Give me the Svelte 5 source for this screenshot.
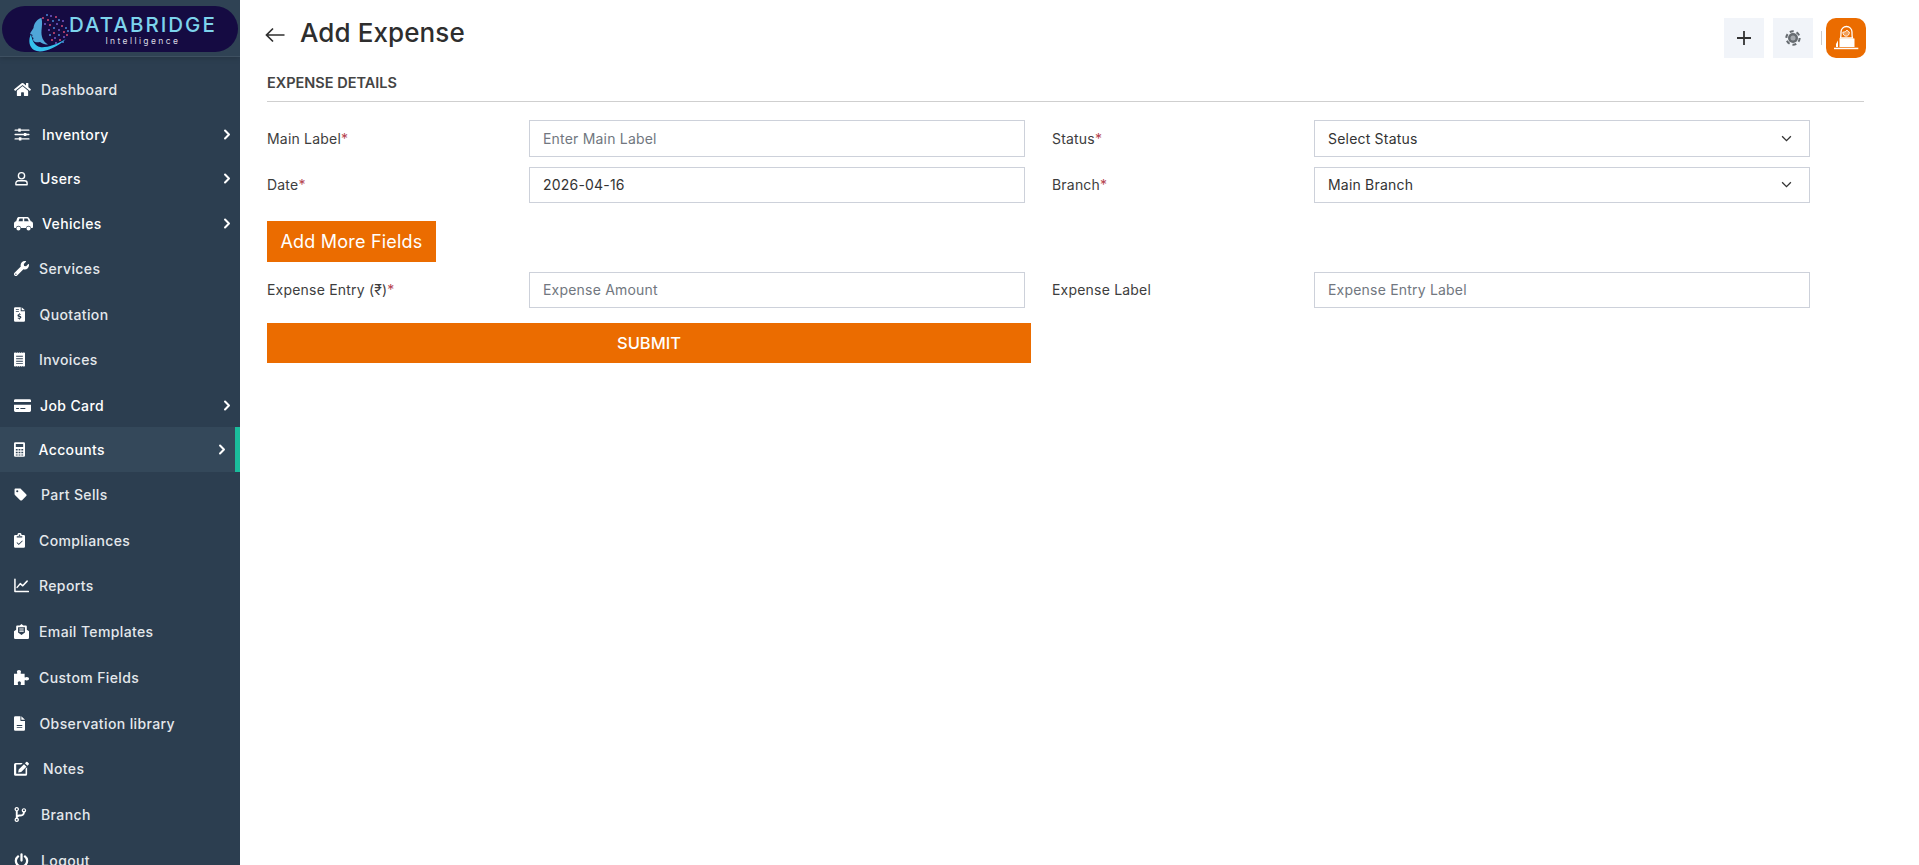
<script lang="ts">
  // icon paths on a 24 grid unless a nav item brings its own viewBox
  const HOME = 'M280.37 148.26L96 300.11V464a16 16 0 0 0 16 16l112.06-.29a16 16 0 0 0 15.92-16V368a16 16 0 0 1 16-16h64a16 16 0 0 1 16 16v95.64a16 16 0 0 0 16 16.05L464 480a16 16 0 0 0 16-16V300L295.67 148.26a12.19 12.19 0 0 0-15.3 0zM571.6 251.47L488 182.56V44.05a12 12 0 0 0-12-12h-56a12 12 0 0 0-12 12v72.61L318.47 43a48 48 0 0 0-61 0L4.34 251.47a12 12 0 0 0-1.6 16.9l25.5 31A12 12 0 0 0 45.15 301l235.22-193.74a12.19 12.19 0 0 1 15.3 0L530.9 301a12 12 0 0 0 16.9-1.6l25.5-31a12 12 0 0 0-1.7-16.93z';
  const WRENCH = 'M507.73 109.1c-2.24-9.03-13.54-12.09-20.12-5.51l-74.36 74.36-67.88-11.31-11.31-67.88 74.36-74.36c6.62-6.62 3.43-17.9-5.66-20.16-47.38-11.74-99.55.91-136.58 37.93-39.64 39.64-50.55 97.1-34.05 147.2L18.74 402.76c-24.99 24.99-24.99 65.51 0 90.5 24.99 24.99 65.51 24.99 90.5 0l213.21-213.21c50.12 16.71 107.47 5.68 147.37-34.22 37.07-37.07 49.7-89.32 37.91-136.73zM64 472c-13.25 0-24-10.75-24-24 0-13.26 10.75-24 24-24s24 10.74 24 24c0 13.25-10.75 24-24 24z';

  const nav = [
    { label: 'Dashboard', w: 17, gap: 10, vb: '0 0 576 512', d: HOME },
    { label: 'Inventory', w: 16, gap: 12, sub: true, line: 'M1 5h22M1 12h22M1 19h22', d: 'M6 2.5h4v5H6zM15 9.5h4v5h-4zM7 16.5h4v5H7z' },
    { label: 'Users', w: 15, gap: 11, sub: true, line: 'M12 2.5a5 5 0 1 1 0 10a5 5 0 1 1 0-10zM3 22v-2.5a4 4 0 0 1 4-4h10a4 4 0 0 1 4 4V22z' },
    { label: 'Vehicles', w: 19, gap: 9, sub: true, vb: '0 0 26 20', d: 'M7 1h11c1.2 0 2 .6 2.6 1.6L23 7c1.8.4 3 1.6 3 3.4V15c0 .6-.4 1-1 1h-1.6a3.6 3.6 0 0 0-7 0H9.600a3.6 3.6 0 0 0-7 0H1c-.6 0-1-.4-1-1v-4.600C0 8.600 1.200 7.400 3 7l1.400-4.400C4.800 1.600 5.800 1 7 1zM7.600 3.200 6.200 7H12V3.200zM14 3.200V7h6.200l-1.800-3.800zM6.100 14a2.800 2.800 0 1 1 0 5.600a2.800 2.800 0 1 1 0-5.600zM19.900 14a2.800 2.800 0 1 1 0 5.600a2.800 2.800 0 1 1 0-5.600z' },
    { label: 'Services', w: 15, gap: 10, vb: '0 0 512 512', d: WRENCH },
    { label: 'Quotation', w: 11, gap: 14.500, vb: '0 0 18 24', d: 'M2 0h9v6.500h7V22a2 2 0 0 1-2 2H2a2 2 0 0 1-2-2V2a2 2 0 0 1 2-2zM12.500 0 18 5h-5.500zM3 3.500v1.300h5V3.500zM3 6.500v1.300h5V6.500zM8.200 10v1.300c-1.500.2-2.500 1.100-2.500 2.400 0 1.400 1.100 2 2.500 2.400 1.100.3 1.600.6 1.600 1 0 .5-.6.7-1.200.7-.7 0-1.500-.3-2-.7l-.8 1.200c.6.500 1.400.8 2.400 .9V20h1.400v-1.300c1.500-.2 2.400-1.100 2.400-2.400 0-1.400-1-2-2.400-2.400-1.100-.3-1.700-.5-1.700-1 0-.4.500-.6 1.100-.6.600 0 1.200.2 1.700.5l.7-1.200c-.5-.3-1.100-.5-1.800-.6V10z' },
    { label: 'Invoices', w: 11, gap: 14, vb: '0 0 18 24', d: 'M0 0l1.500 1.200L3 0l1.500 1.200L6 0l1.500 1.200L9 0l1.500 1.200L12 0l1.500 1.200L15 0l1.500 1.200L18 0v24l-1.500-1.200L15 24l-1.500-1.200L12 24l-1.500-1.200L9 24l-1.500-1.200L6 24l-1.500-1.200L3 24l-1.500-1.200L0 24zM3.500 6v1.500h11V6zM3.500 10v1.500h11V10zM3.500 14v1.500h11V14zM3.500 18v1.500h11V18z' },
    { label: 'Job Card', w: 17, gap: 9, sub: true, vb: '0 0 24 18', d: 'M2 0h20a2 2 0 0 1 2 2v2H0V2a2 2 0 0 1 2-2zM0 8h24v8a2 2 0 0 1-2 2H2a2 2 0 0 1-2-2zM3 12.500v1.500h4v-1.500zM9 12.500v1.500h7v-1.500z' },
    { label: 'Accounts', w: 11, gap: 13.500, sub: true, active: true, vb: '0 0 18 24', d: 'M2 0h14a2 2 0 0 1 2 2v20a2 2 0 0 1-2 2H2a2 2 0 0 1-2-2V2a2 2 0 0 1 2-2zM3 3v5h12V3zM3 11v2.500h3V11zM7.500 11v2.500h3V11zM12 11v2.500h3V11zM3 15.500V18h3v-2.500zM7.500 15.500V18h3v-2.500zM12 15.500V18h3v-2.500zM3 20v2h3v-2zM7.500 20v2h3v-2zM12 20v2h3v-2z' },
    { label: 'Part Sells', w: 13, gap: 14, vb: '0 0 24 24', d: 'M2.500 1H11c.7 0 1.300.3 1.800.7l9.700 9.700c1 1 1 2.500 0 3.500l-7.600 7.600c-1 1-2.500 1-3.500 0l-9.700-9.700C1.300 12.300 1 11.700 1 11V2.500C1 1.700 1.700 1 2.500 1zM6 4a2 2 0 1 0 0 4a2 2 0 1 0 0-4z' },
    { label: 'Compliances', w: 11, gap: 14, vb: '0 0 18 24', d: 'M2 3h3.500a3.500 3.500 0 0 1 7 0H16a2 2 0 0 1 2 2v17a2 2 0 0 1-2 2H2a2 2 0 0 1-2-2V5a2 2 0 0 1 2-2zM9 2a1.300 1.300 0 1 0 0 2.600A1.300 1.300 0 0 0 9 2zM4.500 5v2h9V5zM13.400 11.800l-5.600 5.600-2.700-2.700-1 1 3.700 3.700 6.600-6.600z' },
    { label: 'Reports', w: 15, gap: 10, line: 'M1.500 2v19.500H23M5 15l5-6 4 3.500L21 5', sw: 2.400 },
    { label: 'Email Templates', w: 15, gap: 10, vb: '0 0 24 24', d: 'M12 0l3 2.500h4a1.500 1.500 0 0 1 1.500 1.500v5L24 11.500V22a2 2 0 0 1-2 2H2a2 2 0 0 1-2-2V11.500L3.500 9V4A1.500 1.500 0 0 1 5 2.500h4zM6.500 5v8.500l5.500 4 5.500-4V5zM8.500 7v1.800h7V7zM8.500 10.500v1.800h7v-1.800z' },
    { label: 'Custom Fields', w: 15, gap: 10, vb: '0 0 24 24', d: 'M8 0c2 0 3.200 1.200 3.200 2.800 0 1-.7 1.600-.7 2.400 0 .4.300.8 1 .8H17v5c0 .7.400 1 .8 1 .8 0 1.400-.7 2.400-.7C22.800 11.300 24 12.500 24 14s-1.200 2.700-3.800 2.700c-1 0-1.600-.7-2.400-.7-.4 0-.8.300-.8 1v7h-5.500c-.7 0-1-.4-1-.8 0-.8.700-1.400.7-2.400C11 19.200 9.800 18 8.500 18S6 19.200 6 20.800c0 1 .7 1.600.7 2.400 0 .4-.3.8-1 .8H0V6h4.300c.7 0 1-.4 1-.8 0-.8-.7-1.400-.7-2.400C4.600 1.200 6 0 8 0z' },
    { label: 'Observation library', w: 11, gap: 14.500, vb: '0 0 18 24', d: 'M2 0h8.500v6.500c0 .8.700 1.500 1.500 1.500h6v14a2 2 0 0 1-2 2H2a2 2 0 0 1-2-2V2a2 2 0 0 1 2-2zM12 0l6 6h-6zM4.500 14.500v1.500h9v-1.500zM4.500 18v1.500h9V18z' },
    { label: 'Notes', w: 15, gap: 14, vb: '0 0 24 24', d: 'M2.500 3H14l-2.500 2.500H3.500v15h15v-8l2.500-2.500V21a2.500 2.500 0 0 1-2.500 2.500h-16A2.500 2.500 0 0 1 0 21V5.500A2.500 2.500 0 0 1 2.500 3zM19.500 1.500a1.500 1.500 0 0 1 2 0l2 2a1.500 1.500 0 0 1 0 2L21.500 7.500 17.500 3.500zM16 5l4 4-8.500 8.500-4.800.8.800-4.800z' },
    { label: 'Branch', w: 13, gap: 14, vb: '0 0 20 24', d: 'M4 0a3.500 3.500 0 0 1 1.500 6.700v6.100c1-.6 2.200-.8 3.500-.8 3 0 4.900-1 5-3.400a3.500 3.500 0 1 1 3 0C16.800 12.400 13.500 15 9 15c-2 0-3.500 1-3.500 2.300a3.500 3.500 0 1 1-3 0V6.700A3.500 3.500 0 0 1 4 0zM4 2a1.500 1.500 0 1 0 0 3A1.500 1.500 0 0 0 4 2zM15.500 3.500a1.500 1.500 0 1 0 0 3 1.500 1.500 0 0 0 0-3zM4 19a1.500 1.500 0 1 0 0 3 1.500 1.500 0 0 0 0-3z' },
    { label: 'Logout', w: 15, gap: 12, line: 'M12 2v10M6.500 5.500a9 9 0 1 0 11 0', sw: 3.600 }
  ];

  const dots = [
    [31, 12], [35, 9], [39, 10], [44, 11], [47, 14], [51, 15], [36, 14], [41, 15], [45, 18], [50, 20], [54, 22],
    [33, 18], [38, 19], [42, 22], [47, 24], [52, 26], [56, 25], [37, 24], [42, 27], [47, 29], [52, 31], [55, 29],
    [38, 29], [43, 32], [48, 34], [51, 36], [44, 37], [40, 34]
  ];
</script>

<div class="page">
  <aside class="sidebar">
    <div class="brand">
      <div class="logo">
        <svg class="logo-mark" viewBox="0 0 60 52" width="60" height="52" aria-hidden="true">
          <path d="M29 12c-5 2-7 6-7.500 10L18 27.500l2.500 1.500-.5 2 1.500 1-.5 2c1 2.500 4 2.500 7 2 3 2 5 2.500 8 2.500-5-3-7-8-6.500-14 .5-5 1-8 0-12.500z" fill="#4fa6d8" />
          <path d="M19 28c-3 6-2 13 3 16 7 4 21-1 32-11-10 6-20 9-26 8-5-1-8-6-9-13z" fill="#35c0ec" />
          {#each dots as [cx, cy], i}
            <circle {cx} {cy} r="0.95" fill={i % 3 === 0 ? '#e0507a' : i % 3 === 1 ? '#4f8fe0' : '#7a5fd0'} />
          {/each}
        </svg>
        <div class="logo-text">
          <span class="logo-name">DATABRIDGE</span>
          <span class="logo-sub">Intelligence</span>
        </div>
      </div>
    </div>

    <nav>
      {#each nav as item}
        <div class="item" class:sub={item.sub} class:active={item.active}>
          <svg
            class="ico"
            viewBox={item.vb ?? '0 0 24 24'}
            style="width:{item.w}px;margin-right:{item.gap}px"
            aria-hidden="true"
          >
            {#if item.line}
              <path d={item.line} fill="none" stroke="#fff" stroke-width={item.sw ?? 2.2} stroke-linecap="round" stroke-linejoin="round" />
            {/if}
            {#if item.d}
              <path d={item.d} fill="#fff" fill-rule="evenodd" />
            {/if}
          </svg>
          <span>{item.label}</span>
          {#if item.sub}
            <svg class="chev" viewBox="0 0 10 14" width="8" height="11" aria-hidden="true">
              <path d="M2.500 2l5 5-5 5" fill="none" stroke="#fff" stroke-width="2.600" stroke-linecap="round" stroke-linejoin="round" />
            </svg>
          {/if}
        </div>
      {/each}
    </nav>
  </aside>

  <main>
    <header class="topbar">
      <svg class="back" viewBox="0 0 20 16" width="20" height="16" aria-hidden="true">
        <path d="M19.500 8H1.500M8 1.500 1.500 8 8 14.500" fill="none" stroke="#2f2f2f" stroke-width="1.700" />
      </svg>
      <h1>Add Expense</h1>
      <div class="actions">
        <button class="tool" aria-label="Add">
          <svg viewBox="0 0 16 16" width="16" height="16" aria-hidden="true">
            <path d="M8 1v14M1 8h14" stroke="#333" stroke-width="1.800" />
          </svg>
        </button>
        <button class="tool" aria-label="Settings">
          <svg viewBox="0 0 24 24" width="16" height="16" aria-hidden="true">
            <circle cx="12" cy="12" r="10" fill="none" stroke="#666b70" stroke-width="3" stroke-dasharray="6 4.470" />
            <circle cx="12" cy="12" r="7.500" fill="#666b70" />
            <circle cx="12" cy="12" r="3.800" fill="#a4a8ad" />
          </svg>
        </button>
        <span class="divider"></span>
        <div class="avatar">
          <svg viewBox="0 0 40 40" width="40" height="40" aria-hidden="true">
            <path d="M14.500 20c.6-1.500.5-3.500.5-6a5.500 5.500 0 0 1 11 0c0 2.500-.1 4.500.5 6z" fill="none" stroke="#fff" stroke-width="1.300" />
            <path d="M16.800 14.200c2 0 3.300-.9 4.200-2.200.6 1.200 1.200 1.800 2.400 2.200-.1 2.300-1.400 4-3.300 4s-3.200-1.700-3.300-4z" fill="#fff" fill-opacity="0.35" stroke="#fff" stroke-width="0.900" />
            <path d="M13.500 20.500h15v8.500h-15z" fill="#fff" />
            <path d="M10 26l2-3.500V29h-2z" fill="#fff" />
            <path d="M8 29.700h24.300v1.500H8z" fill="#fff" />
          </svg>
        </div>
      </div>
    </header>

    <h2>EXPENSE DETAILS</h2>

    <form onsubmit={(e) => e.preventDefault()}>
      <div class="row first">
        <label class="field">
          <span>Main Label<em>*</em></span>
          <input type="text" placeholder="Enter Main Label" />
        </label>
        <label class="field">
          <span>Status<em>*</em></span>
          <div class="select">
            <select>
              <option>Select Status</option>
            </select>
            <svg viewBox="0 0 12 8" width="11" height="7" aria-hidden="true"><path d="M1 1.500l5 5 5-5" fill="none" stroke="#333" stroke-width="1.500" /></svg>
          </div>
        </label>
      </div>

      <div class="row">
        <label class="field">
          <span>Date<em>*</em></span>
          <input class="filled" type="text" value="2026-04-16" />
        </label>
        <label class="field">
          <span>Branch<em>*</em></span>
          <div class="select">
            <select>
              <option>Main Branch</option>
            </select>
            <svg viewBox="0 0 12 8" width="11" height="7" aria-hidden="true"><path d="M1 1.500l5 5 5-5" fill="none" stroke="#333" stroke-width="1.500" /></svg>
          </div>
        </label>
      </div>

      <button type="button" class="more">Add More Fields</button>

      <div class="row">
        <label class="field">
          <span>Expense Entry (₹)<em>*</em></span>
          <input type="text" placeholder="Expense Amount" />
        </label>
        <label class="field">
          <span>Expense Label</span>
          <input type="text" placeholder="Expense Entry Label" />
        </label>
      </div>

      <button type="submit" class="submit">SUBMIT</button>
    </form>
  </main>
</div>

<style>
  :global(body) {
    background: #fff;
    font-family: Inter, 'Noto Sans', sans-serif;
    color: #333;
  }

  .page {
    display: flex;
    height: 100vh;
    overflow: hidden;
  }

  .sidebar {
    flex: 0 0 240px;
    background: #2c3e50;
    overflow: hidden;
  }

  .brand {
    position: relative;
    height: 57px;
    padding: 6px 2px 0;
    box-sizing: border-box;
    background: #2f4254;
    border-bottom: 1px solid #3e5061;
    box-shadow: 0 0 6px rgb(0 0 0 / 0.25);
  }

  .logo {
    display: flex;
    align-items: center;
    height: 46px;
    border-radius: 23px;
    background: #150b42;
    padding-left: 6px;
  }

  .logo-mark {
    flex: none;
    margin-top: 6px;
    margin-left: 4px;
    margin-right: -3px;
  }

  .logo-text {
    display: flex;
    flex-direction: column;
    align-items: center;
    margin-top: 2px;
  }

  .logo-name {
    font-size: 20.500px;
    line-height: 22px;
    font-weight: 500;
    letter-spacing: 2px;
    color: #7dd3ec;
  }

  .logo-sub {
    font-size: 8.500px;
    line-height: 10px;
    letter-spacing: 2.400px;
    color: #d9d9e2;
  }

  nav {
    padding-top: 9.500px;
  }

  .item {
    display: flex;
    align-items: center;
    height: 45.700px;
    padding-left: 14px;
    font-size: 14px;
    font-weight: 450;
    letter-spacing: 0.380px;
    color: #e4e8ec;
  }

  .item.sub {
    height: 44.500px;
    color: #fff;
  }

  .item.active {
    background: #34485a;
    box-shadow: inset -5px 0 0 #1abc9c;
  }

  .ico {
    flex: none;
    height: 15px;
  }

  .chev {
    margin-left: auto;
    margin-right: 9px;
  }

  .active .chev {
    margin-right: 14px;
  }

  main {
    flex: 1;
    min-width: 0;
    padding: 18px 55px 0 27px;
  }

  .topbar {
    display: flex;
    align-items: flex-start;
    height: 40px;
  }

  .back {
    margin: 9px 0 0 -2px;
  }

  h1 {
    margin: 0 0 0 15px;
    font-size: 26px;
    line-height: 30px;
    font-weight: 500;
    letter-spacing: 0.100px;
    color: #2e2e2e;
  }

  .actions {
    display: flex;
    align-items: center;
    gap: 9px;
    margin-left: auto;
    margin-right: -2px;
  }

  .tool {
    display: grid;
    place-items: center;
    width: 40px;
    height: 40px;
    padding: 0;
    border: 0;
    background: #f1f4f9;
  }

  .divider {
    width: 1px;
    height: 14px;
    margin-left: -1px;
    margin-right: -5px;
    background: #ccc;
  }

  .avatar {
    width: 40px;
    height: 40px;
    border-radius: 10px;
    background: #eb6c00;
  }

  h2 {
    margin: 16px 0 0;
    height: 27px;
    border-bottom: 1px solid #cfcfcf;
    font-size: 14.500px;
    line-height: 18px;
    font-weight: 600;
    color: #444;
  }

  form {
    margin-top: 18px;
    width: 1543px;
  }

  .row {
    display: grid;
    grid-template-columns: 1fr 1fr;
    column-gap: 27px;
    margin-bottom: 10px;
  }

  .field {
    display: grid;
    grid-template-columns: 262px 1fr;
    align-items: center;
    font-size: 14px;
    letter-spacing: 0.200px;
    color: #3d3d3d;
  }

  .field > span {
    padding-bottom: 1px;
  }

  em {
    font-style: normal;
    color: #b5434f;
  }

  input,
  select {
    box-sizing: border-box;
    width: 100%;
    height: 36px;
    padding: 0 13px 1px;
    border: 1px solid #cdd1da;
    border-radius: 0;
    background: #fff;
    font: inherit;
    letter-spacing: inherit;
    color: #333;
    outline: none;
    appearance: none;
  }

  .first input,
  .first select {
    height: 37px;
  }

  input::placeholder {
    color: #717780;
    opacity: 1;
  }

  .select {
    position: relative;
    display: flex;
  }

  .select svg {
    position: absolute;
    right: 18px;
    top: 50%;
    margin-top: -4px;
    pointer-events: none;
  }

  .more {
    display: block;
    height: 41px;
    margin: 18px 0 10px;
    padding: 0 13.500px;
    border: 0;
    background: #eb6c00;
    font: inherit;
    font-size: 18px;
    letter-spacing: 0.200px;
    color: #fff;
  }

  .submit {
    display: block;
    width: 764px;
    height: 40px;
    margin-top: 15px;
    border: 0;
    background: #eb6c00;
    font: inherit;
    font-size: 16.500px;
    font-weight: 500;
    color: #fff;
  }
</style>
